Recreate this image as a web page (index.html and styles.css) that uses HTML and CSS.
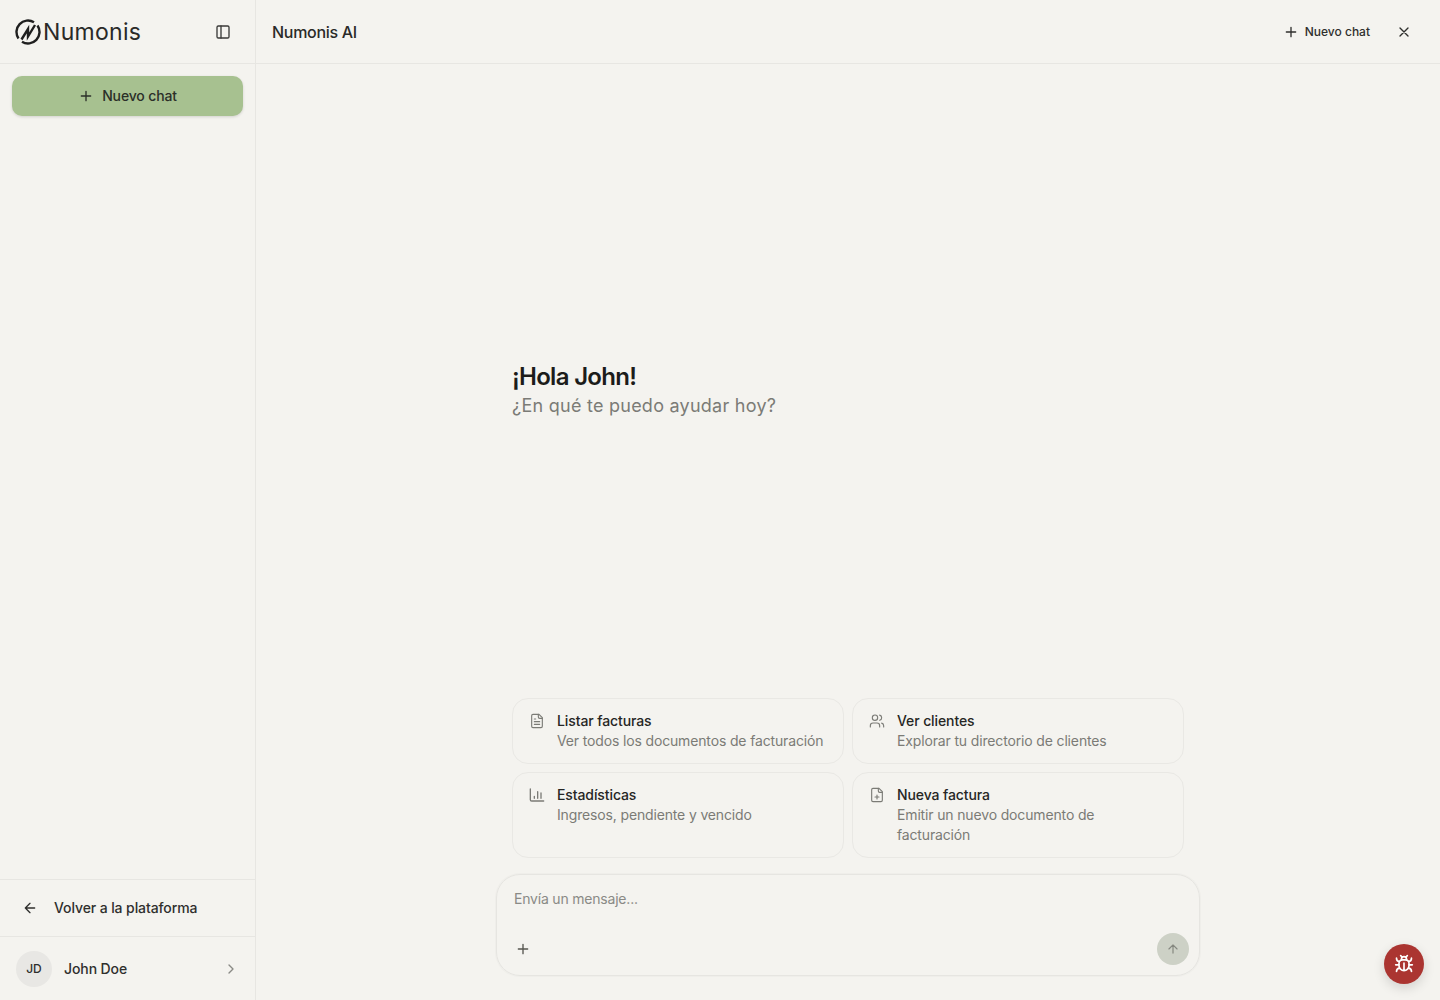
FILE: index.html
```html
<!DOCTYPE html>
<html lang="es">
<head>
  <meta charset="UTF-8">
  <meta name="viewport" content="width=device-width, initial-scale=1.0">
  <title>Numonis AI</title>
  <link rel="stylesheet" href="styles.css">
</head>
<body>
  <div class="app">
    <aside class="sidebar">
      <div class="sidebar-top">
        <div class="logo">
          <svg class="logo-mark" viewBox="0 0 26 26" fill="none" stroke="#1f1f1f" stroke-width="2.4">
            <path d="M3.500 19.500A11.500 11.500 0 0 1 19 3.200"/>
            <path d="M22.500 6.500A11.500 11.500 0 0 1 7 22.800"/>
            <path d="M6.500 20.500 13 10v7.500l7-11.500"/>
          </svg>
          <span class="logo-text">Numonis</span>
        </div>
        <button class="icon-btn">
          <svg class="icon" viewBox="0 0 24 24" fill="none" stroke="currentColor" stroke-width="2" stroke-linecap="round" stroke-linejoin="round"><rect x="3" y="3" width="18" height="18" rx="2"/><path d="M9 3v18"/></svg>
        </button>
      </div>
      <div class="sidebar-new">
        <button class="new-chat-main">
          <svg class="icon" viewBox="0 0 24 24" fill="none" stroke="currentColor" stroke-width="2" stroke-linecap="round"><path d="M5 12h14M12 5v14"/></svg>
          <span class="new-chat-label">Nuevo chat</span>
        </button>
      </div>
      <div class="sidebar-back">
        <svg class="icon" viewBox="0 0 24 24" fill="none" stroke="currentColor" stroke-width="2" stroke-linecap="round" stroke-linejoin="round"><path d="M19 12H5M12 19l-7-7 7-7"/></svg>
        <span class="back-label">Volver a la plataforma</span>
      </div>
      <div class="sidebar-user">
        <span class="avatar">JD</span>
        <span class="user-name">John Doe</span>
        <svg class="icon chevron" viewBox="0 0 24 24" fill="none" stroke="currentColor" stroke-width="2" stroke-linecap="round" stroke-linejoin="round"><path d="m9 18 6-6-6-6"/></svg>
      </div>
    </aside>

    <main class="main">
      <header class="topbar">
        <h1 class="topbar-title">Numonis AI</h1>
        <div class="topbar-actions">
          <button class="topbar-new">
            <svg class="icon" viewBox="0 0 24 24" fill="none" stroke="currentColor" stroke-width="2" stroke-linecap="round"><path d="M5 12h14M12 5v14"/></svg>
            Nuevo chat
          </button>
          <button class="icon-btn close-btn">
            <svg class="icon" viewBox="0 0 24 24" fill="none" stroke="currentColor" stroke-width="2" stroke-linecap="round"><path d="M18 6 6 18M6 6l12 12"/></svg>
          </button>
        </div>
      </header>

      <section class="chat">
        <div class="hero">
          <h2 class="hero-title">¡Hola John!</h2>
          <p class="hero-sub">¿En qué te puedo ayudar hoy?</p>
        </div>

        <div class="cards">
          <div class="card">
            <svg class="card-icon" viewBox="0 0 24 24" fill="none" stroke="currentColor" stroke-width="1.7" stroke-linecap="round" stroke-linejoin="round"><path d="M15 2H6a2 2 0 0 0-2 2v16a2 2 0 0 0 2 2h12a2 2 0 0 0 2-2V7Z"/><path d="M14 2v4a2 2 0 0 0 2 2h4M10 9H8M16 13H8M16 17H8"/></svg>
            <div class="card-text">
              <div class="card-title">Listar facturas</div>
              <div class="card-desc">Ver todos los documentos de facturación</div>
            </div>
          </div>
          <div class="card">
            <svg class="card-icon" viewBox="0 0 24 24" fill="none" stroke="currentColor" stroke-width="1.7" stroke-linecap="round" stroke-linejoin="round"><path d="M16 21v-2a4 4 0 0 0-4-4H6a4 4 0 0 0-4 4v2"/><circle cx="9" cy="7" r="4"/><path d="M22 21v-2a4 4 0 0 0-3-3.870M16 3.130a4 4 0 0 1 0 7.750"/></svg>
            <div class="card-text">
              <div class="card-title">Ver clientes</div>
              <div class="card-desc">Explorar tu directorio de clientes</div>
            </div>
          </div>
          <div class="card">
            <svg class="card-icon" viewBox="0 0 24 24" fill="none" stroke="currentColor" stroke-width="2" stroke-linecap="round" stroke-linejoin="round"><path d="M2 3v16a2 2 0 0 0 2 2h18M8 17v-3M13 17V7M18 17V9"/></svg>
            <div class="card-text">
              <div class="card-title">Estadísticas</div>
              <div class="card-desc">Ingresos, pendiente y vencido</div>
            </div>
          </div>
          <div class="card">
            <svg class="card-icon" viewBox="0 0 24 24" fill="none" stroke="currentColor" stroke-width="1.7" stroke-linecap="round" stroke-linejoin="round"><path d="M15 2H6a2 2 0 0 0-2 2v16a2 2 0 0 0 2 2h12a2 2 0 0 0 2-2V7Z"/><path d="M14 2v4a2 2 0 0 0 2 2h4M9 15h6M12 18v-6"/></svg>
            <div class="card-text">
              <div class="card-title">Nueva factura</div>
              <div class="card-desc">Emitir un nuevo documento de facturación</div>
            </div>
          </div>
        </div>

        <div class="composer">
          <div class="composer-input">Envía un mensaje...</div>
          <div class="composer-actions">
            <button class="attach-btn">
              <svg class="icon" viewBox="0 0 24 24" fill="none" stroke="currentColor" stroke-width="2" stroke-linecap="round"><path d="M5 12h14M12 5v14"/></svg>
            </button>
            <button class="send-btn">
              <svg class="icon" viewBox="0 0 24 24" fill="none" stroke="currentColor" stroke-width="2" stroke-linecap="round" stroke-linejoin="round"><path d="m5 12 7-7 7 7M12 19V5"/></svg>
            </button>
          </div>
        </div>
      </section>
    </main>
  </div>

  <button class="bug-btn">
    <svg viewBox="0 0 24 24" fill="none" stroke="currentColor" stroke-width="2" stroke-linecap="round" stroke-linejoin="round"><path d="m8 2 1.900 1.900M16 2l-1.900 1.900M9 7.100v-1a3 3 0 1 1 6 0v1"/><path d="M12 20c-3.300 0-6-2.700-6-6v-3a4 4 0 0 1 4-4h4a4 4 0 0 1 4 4v3c0 3.300-2.700 6-6 6M12 20v-9"/><path d="M6.500 9C4.600 8.800 3 7.100 3 5M6 13H2M3 21c0-2.100 1.700-3.900 3.800-4M20.970 5c0 2.100-1.600 3.800-3.500 4M22 13h-4M17.200 17c2.100.1 3.800 1.900 3.800 4"/></svg>
  </button>
</body>
</html>
```

FILE: styles.css
```css
* {
  margin: 0;
  padding: 0;
  box-sizing: border-box;
}

body {
  background: #f4f3ef;
  color: #1f1f1d;
  font-family: Inter, "Liberation Sans", sans-serif;
  font-size: 14px;
  height: 1000px;
  overflow: hidden;
}

button {
  background: none;
  border: none;
  color: inherit;
  font-family: inherit;
}

.app {
  display: flex;
  height: 1000px;
}

.icon {
  width: 16px;
  height: 16px;
  flex-shrink: 0;
}

/* Sidebar */
.sidebar {
  width: 256px;
  flex-shrink: 0;
  display: flex;
  flex-direction: column;
  border-right: 1px solid #e7e6e2;
}

.sidebar-top {
  height: 64px;
  flex-shrink: 0;
  display: flex;
  align-items: center;
  justify-content: space-between;
  padding: 0 24px 0 15px;
  border-bottom: 1px solid #e7e6e2;
}

.logo {
  display: flex;
  align-items: center;
  gap: 2px;
}

.logo-mark {
  width: 26px;
  height: 26px;
}

.logo-text {
  font-size: 23px;
  line-height: 28px;
  letter-spacing: 0.3px;
  color: #2a2a28;
}

.icon-btn {
  display: flex;
  color: #3a3a38;
}

.sidebar-new {
  flex: 1;
  padding: 12px 12px 0 12px;
}

.new-chat-main {
  width: 231px;
  height: 40px;
  display: flex;
  align-items: center;
  justify-content: center;
  gap: 8px;
  background: #a7c190;
  border-radius: 10px;
  box-shadow: 0 1px 3px rgba(0, 0, 0, 0.14);
  font-size: 14px;
  font-weight: 500;
  letter-spacing: -0.15px;
  color: #2b2f28;
}

.new-chat-label {
  margin-top: -1px;
}

.sidebar-back {
  height: 58px;
  flex-shrink: 0;
  display: flex;
  align-items: center;
  gap: 16px;
  padding: 0 0 0 22px;
  border-top: 1px solid #e7e6e2;
  border-bottom: 1px solid #e7e6e2;
  font-size: 14px;
  font-weight: 500;
  letter-spacing: -0.1px;
  color: #2f2f2d;
}

.back-label {
  margin-top: -1px;
}

.sidebar-user {
  height: 63px;
  flex-shrink: 0;
  display: flex;
  align-items: center;
  padding: 0 16px 0 16px;
}

.avatar {
  width: 36px;
  height: 36px;
  border-radius: 50%;
  background: #e8e7e4;
  display: flex;
  align-items: center;
  justify-content: center;
  font-size: 12px;
  font-weight: 500;
  color: #2f2f2d;
}

.user-name {
  flex: 1;
  margin-left: 12px;
  font-size: 14px;
  font-weight: 500;
  letter-spacing: -0.1px;
  color: #2f2f2d;
}

.chevron {
  color: #8a8a86;
}

/* Main area */
.main {
  flex: 1;
  display: flex;
  flex-direction: column;
  min-width: 0;
}

.topbar {
  height: 64px;
  flex-shrink: 0;
  display: flex;
  align-items: center;
  justify-content: space-between;
  padding: 0 28px 0 16px;
  border-bottom: 1px solid #e7e6e2;
}

.topbar-title {
  font-size: 16px;
  font-weight: 500;
  letter-spacing: -0.3px;
  color: #2a2a28;
}

.topbar-actions {
  display: flex;
  align-items: center;
  gap: 26px;
}

.topbar-new {
  display: flex;
  align-items: center;
  gap: 6px;
  font-size: 12px;
  font-weight: 500;
  color: #2f2f2d;
}

.close-btn {
  color: #2f2f2d;
}

.chat {
  flex: 1;
  display: flex;
  flex-direction: column;
  align-items: center;
  padding-bottom: 24px;
  min-height: 0;
}

.hero {
  flex: 1;
  width: 672px;
  display: flex;
  flex-direction: column;
  justify-content: center;
  padding-top: 18px;
}

.hero-title {
  font-size: 24px;
  line-height: 32px;
  font-weight: 600;
  letter-spacing: -0.7px;
  color: #1c1c1a;
}

.hero-sub {
  font-size: 18px;
  line-height: 26px;
  letter-spacing: 0.25px;
  color: #7b7b76;
}

.cards {
  width: 672px;
  display: grid;
  grid-template-columns: 1fr 1fr;
  gap: 8px;
  margin-bottom: 16px;
}

.card {
  display: flex;
  gap: 12px;
  padding: 12px 16px;
  border: 1px solid #e9e8e4;
  border-radius: 16px;
}

.card-icon {
  width: 16px;
  height: 16px;
  margin-top: 2px;
  flex-shrink: 0;
  color: #7b7b76;
}

.card-text {
  min-width: 0;
}

.card-title {
  font-size: 14px;
  line-height: 20px;
  font-weight: 500;
  letter-spacing: -0.1px;
  color: #262624;
}

.card-desc {
  font-size: 14px;
  line-height: 20px;
  letter-spacing: -0.15px;
  color: #7b7b76;
}

/* Message box */
.composer {
  width: 704px;
  height: 102px;
  flex-shrink: 0;
  display: flex;
  flex-direction: column;
  justify-content: space-between;
  padding: 14px 10px 10px 17px;
  border: 1px solid #e6e5e1;
  border-radius: 24px;
  box-shadow: 0 0 0 1px #efeeea;
}

.composer-input {
  font-size: 14px;
  line-height: 20px;
  letter-spacing: -0.2px;
  color: #8a8a86;
}

.composer-actions {
  display: flex;
  align-items: center;
  justify-content: space-between;
}

.attach-btn {
  display: flex;
  color: #55554f;
  margin-left: 1px;
}

.send-btn {
  width: 32px;
  height: 32px;
  border-radius: 50%;
  background: #cdd1c6;
  color: #85877f;
  display: flex;
  align-items: center;
  justify-content: center;
}

.send-btn .icon {
  width: 14px;
  height: 14px;
}

/* Floating debug button */
.bug-btn {
  position: fixed;
  right: 16px;
  bottom: 16px;
  width: 40px;
  height: 40px;
  border-radius: 50%;
  background: #ab3531;
  color: #fff;
  display: flex;
  align-items: center;
  justify-content: center;
  box-shadow: 0 4px 12px rgba(0, 0, 0, 0.14);
}

.bug-btn svg {
  width: 20px;
  height: 20px;
}
```
